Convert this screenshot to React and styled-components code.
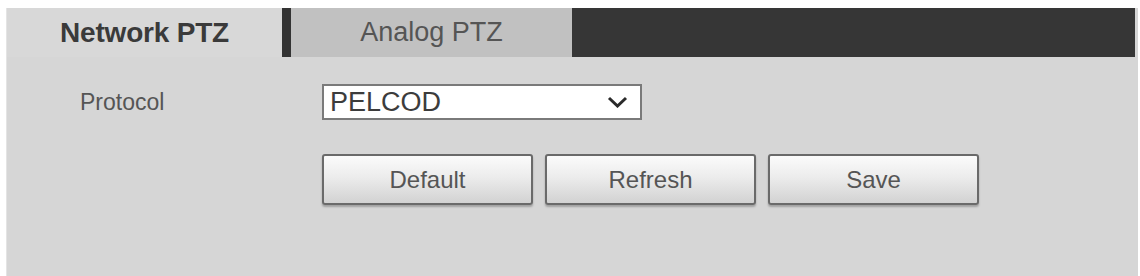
import React from "react";
import styled, { createGlobalStyle } from "styled-components";

const Global = createGlobalStyle`
  html, body { margin: 0; padding: 0; background: #ffffff; }
  body { font-family: "Liberation Sans", Arial, sans-serif; }
`;

const Page = styled.div`
  width: 1140px;
  height: 276px;
  padding: 8px 2px 0 6px;
  box-sizing: border-box;
  overflow: hidden;
`;

const Panel = styled.div`
  height: 100%;
  background: #d6d6d6;
  border-left: 1px solid #e4e4e4;
  display: flex;
  flex-direction: column;
  box-sizing: border-box;
`;

const TabBar = styled.div`
  display: flex;
  height: 49px;
  padding-right: 3px;
`;

const Tab = styled.div`
  width: ${(p) => p.$w}px;
  display: flex;
  align-items: center;
  justify-content: center;
  font-size: ${(p) => (p.$active ? 28 : 27)}px;
  font-weight: ${(p) => (p.$active ? 700 : 400)};
  color: ${(p) => (p.$active ? "#3a3a3a" : "#555")};
  background: ${(p) => (p.$active ? "#d8d8d8" : "#c1c1c1")};
  letter-spacing: ${(p) => (p.$active ? "-0.2px" : "0")};
`;

const Divider = styled.div`
  width: 9px;
  background: #333333;
`;

const Filler = styled.div`
  flex: 1;
  background: #363636;
`;

const Body = styled.div`
  padding: 27px 0 0 73px;
  display: flex;
  flex-direction: column;
  gap: 34px;
`;

const Row = styled.div`
  display: flex;
  align-items: center;
`;

const Label = styled.div`
  width: 242px;
  font-size: 23px;
  color: #555;
`;

const Select = styled.div`
  width: 320px;
  height: 36px;
  box-sizing: border-box;
  border: 2px solid #7a7a7a;
  background: #ffffff;
  display: flex;
  align-items: center;
  justify-content: space-between;
  padding: 0 12px 0 6px;
  font-size: 27px;
  color: #3c3c3c;
`;

const Buttons = styled.div`
  display: flex;
  gap: 12px;
  padding-left: 242px;
`;

const Button = styled.button`
  width: 211px;
  height: 51px;
  border: 2px solid #6a6a6a;
  border-radius: 3px;
  background: linear-gradient(#fbfbfb 0%, #ececec 45%, #d2d2d2 100%);
  box-shadow: 0 2px 2px rgba(0, 0, 0, 0.25);
  font-family: "Liberation Sans", Arial, sans-serif;
  font-size: 24px;
  color: #555;
  padding: 0;
  cursor: pointer;
`;

const Chevron = () => (
  <svg width="21" height="12" viewBox="0 0 21 12">
    <path d="M2 2 L10.5 10 L19 2" fill="none" stroke="#2a2a2a" strokeWidth="3" />
  </svg>
);

export default function App() {
  return (
    <>
      <Global />
      <Page>
        <Panel>
          <TabBar>
            <Tab $active $w={275}>Network PTZ</Tab>
            <Divider />
            <Tab $w={281}>Analog PTZ</Tab>
            <Filler />
          </TabBar>
          <Body>
            <Row>
              <Label>Protocol</Label>
              <Select>
                <span>PELCOD</span>
                <Chevron />
              </Select>
            </Row>
            <Buttons>
              <Button>Default</Button>
              <Button>Refresh</Button>
              <Button>Save</Button>
            </Buttons>
          </Body>
        </Panel>
      </Page>
    </>
  );
}
